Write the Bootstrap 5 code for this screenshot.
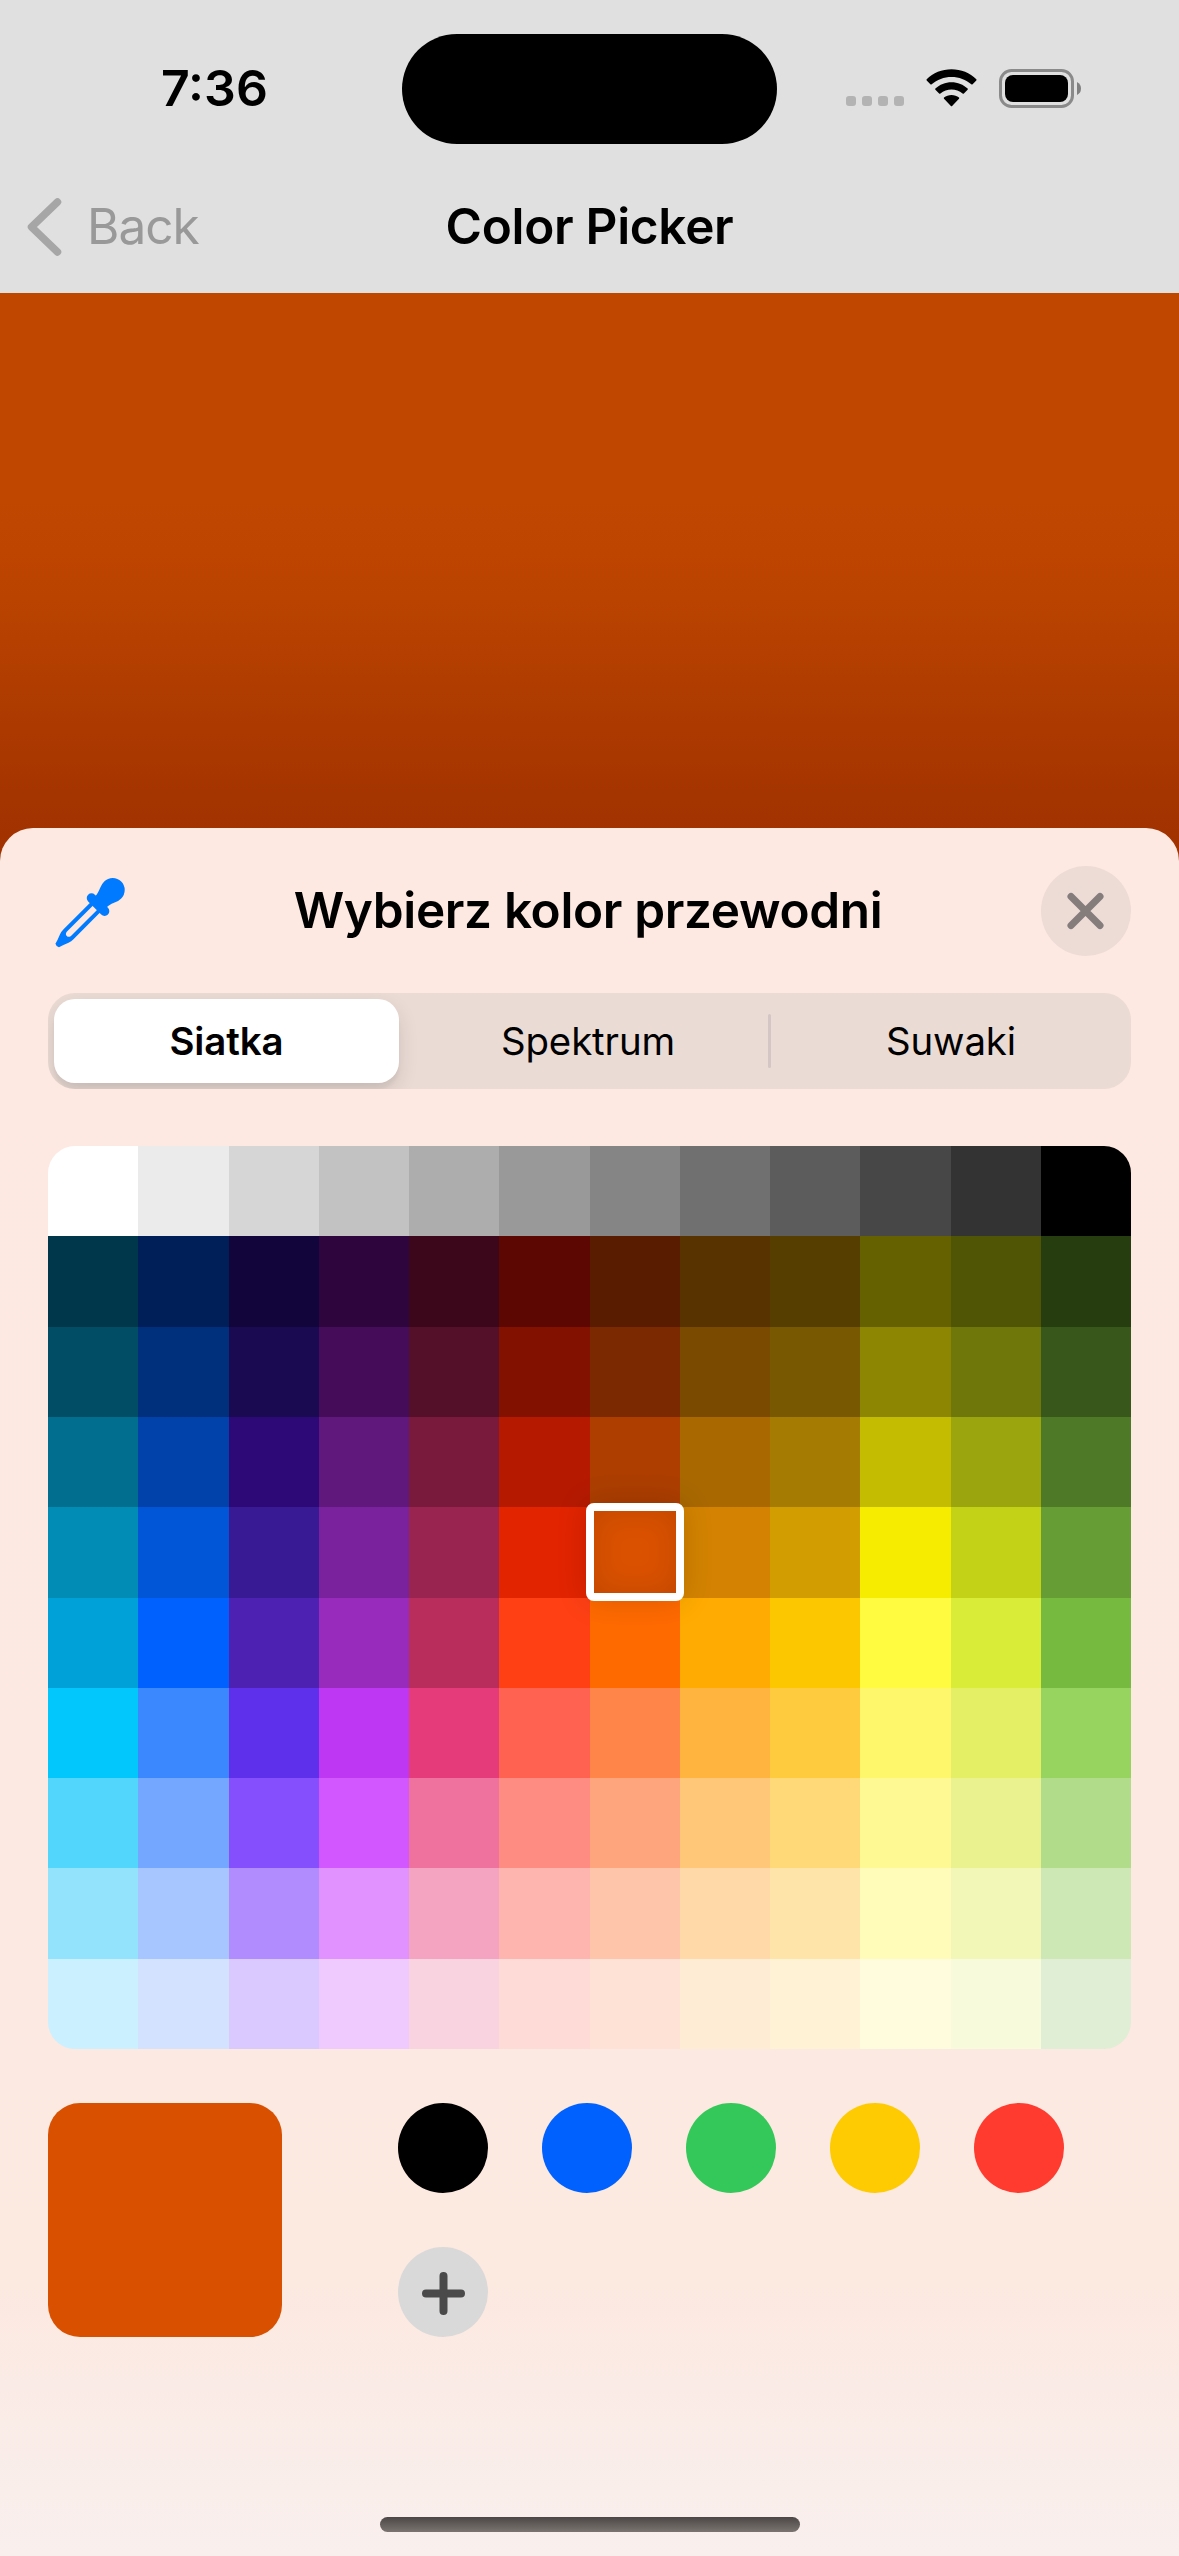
<!DOCTYPE html>
<html lang="pl">
<head>
<meta charset="utf-8">
<meta name="viewport" content="width=device-width, initial-scale=1">
<title>Color Picker</title>
<link rel="stylesheet" href="https://cdn.jsdelivr.net/npm/bootstrap@5.3.0/dist/css/bootstrap.min.css">
<style>
  body { font-family: Inter, "Liberation Sans", sans-serif; color: #000; margin: 0; background: #c04700; }
  svg { display: block; flex: none; }
  .phone { width: 1179px; height: 2556px; overflow: hidden; background: linear-gradient(#c04700 0, #c04700 500px, #ba4300 600px, #ae3b00 705px, #a43400 800px, #a03100 870px); }
  .topbar { height: 293px; background: #e0e0e0; }
  .status { height: 178px; }
  .clock { width: 402px; padding-left: 161px; margin-bottom: 2px; font-size: 50px; font-weight: 600; line-height: 1; }
  .island { width: 375px; height: 110px; background: #000; }
  .indicators { padding-left: 69px; margin-bottom: 2px; }
  .dots { gap: 6px; margin: 26px 22px 0 0; height: 10px; }
  .dots i { width: 10px; height: 10px; border-radius: 3px; background: #b3b3b3; }
  .battery { margin-left: 22px; }
  .navrow { height: 98px; padding: 0 27px; }
  .side { width: 300px; color: #999; font-size: 49.5px; line-height: 1; gap: 25px; letter-spacing: -1px; }
  .heading { font-size: 49.5px; font-weight: 600; line-height: 1; white-space: nowrap; letter-spacing: -.3px; }
  .sheet-head .heading { letter-spacing: -.35px; padding-right: 3px; }
  .canvas-area { height: 535px; }
  .sheet { height: 1728px; padding: 38px 48px 0; border-radius: 33px 33px 0 0;
    background: linear-gradient(#fde9e1 0, #fce9e1 1200px, #fce9e0 1450px, #fbebe6 1560px, #f9eeea 1660px, #f9efed 1728px); }
  .sheet-head { height: 90px; }
  .tool-btn { width: 90px; height: 90px; }
  .close-btn { background: #eddbd5; }
  .segments { height: 96px; margin-top: 37px; padding: 6px 0 6px 6px; border-radius: 27px; overflow: hidden; background: #ebdbd5; font-size: 38.4px; line-height: 1; }
  .segment { flex: 1 1 0; height: 84px; letter-spacing: -.1px; }
  .segment.chosen { flex: 0 0 345px; margin-right: 9px; background: #fff; border-radius: 21px; font-weight: 600; letter-spacing: -.1px; box-shadow: 0 8px 20px rgba(0,0,0,.12), 0 6px 3px rgba(0,0,0,.04); }
  .rule { width: 3px; height: 54px; border-radius: 2px; background: #d3c6c4; }
  .swatches { margin-top: 57px; height: 903px; display: grid; grid-template: repeat(10, 1fr) / repeat(12, 1fr); }
  .corner-tl { border-top-left-radius: 27px; } .corner-tr { border-top-right-radius: 27px; }
  .corner-bl { border-bottom-left-radius: 27px; } .corner-br { border-bottom-right-radius: 27px; }
  .picked::after { content: ""; position: absolute; inset: -3.75px; border: 8px solid #fff; border-radius: 8px; z-index: 2;
    box-shadow: 0 0 30px rgba(0,0,0,.15), inset 0 0 30px rgba(0,0,0,.12); }
  .bottom { margin-top: 54px; }
  .current { width: 234px; height: 234px; border-radius: 32px; background: #d95000; }
  .presets { margin-left: 116px; width: 670px; gap: 54px; }
  .dot { width: 90px; height: 90px; }
  .home { width: 420px; height: 15px; margin-top: 180px; background: linear-gradient(#4b4746, #7b7470); }
</style>
</head>
<body>
<div class="phone d-flex flex-column">
  <header class="topbar">
    <div class="status d-flex align-items-center">
      <div class="clock">7:36</div>
      <div class="island rounded-pill"></div>
      <div class="indicators d-flex align-items-center">
        <div class="dots d-flex"><i></i><i></i><i></i><i></i></div>
        <svg width="51" height="38" viewBox="0 0 51 38"><path d="M25.500 .3C35 .3 44 3.900 50.300 10.300Q50.800 10.900 50.300 11.500L46.600 15.300Q46 15.900 45.300 15.300C40 10.500 33 7.900 25.500 7.900S11 10.500 5.700 15.300Q5 15.900 4.400 15.300L.7 11.500Q.2 10.900.7 10.300C7 3.900 16 .3 25.500 .3ZM25.500 13.200C31.700 13.200 37.400 15.500 41.600 19.500Q42.200 20.100 41.600 20.700L37.900 24.500Q37.300 25.100 36.600 24.500C33.400 22 29.600 20.600 25.500 20.600S17.600 22 14.400 24.500Q13.700 25.100 13.100 24.500L9.400 20.700Q8.800 20.100 9.400 19.500C13.600 15.500 19.300 13.200 25.500 13.200ZM25.500 26C28.300 26 31 26.900 33 28.600Q33.500 29.200 33 29.800L26.100 36.900Q25.500 37.500 24.900 36.900L18 29.800Q17.500 29.200 18 28.600C20 26.900 22.700 26 25.500 26Z"/></svg>
        <svg class="battery" width="83" height="39" viewBox="0 0 83 39"><rect x="1.500" y="1.500" width="72" height="36" rx="11" fill="none" stroke="#8a8a8a" stroke-width="3"/><rect x="6" y="6" width="63" height="27" rx="8"/><path d="M78 13Q82 15 82 19.500T78 26Z" fill="#808080"/></svg>
      </div>
    </div>
    <div class="navrow d-flex align-items-center justify-content-between">
      <div class="side d-flex align-items-center">
        <svg width="35" height="58" viewBox="0 0 35 58"><path d="M30.500 4 4.500 29 30.500 54" fill="none" stroke="#a6a6a6" stroke-width="7.500" stroke-linecap="round" stroke-linejoin="round"/></svg>
        <span>Back</span>
      </div>
      <div class="heading">Color Picker</div>
      <div class="side"></div>
    </div>
  </header>
  <div class="canvas-area"></div>
  <main class="sheet">
    <div class="sheet-head d-flex align-items-center justify-content-between">
      <div class="tool-btn"><svg width="90" height="90" viewBox="0 0 90 90"><g transform="translate(9.200 79.500) rotate(45)" fill="#007aff"><path fill-rule="evenodd" d="M-2.500 0Q0 1.500 2.500 0Q3.500 -4 6 -10Q7 -13 7 -16L7 -56L-7 -56L-7 -16Q-7 -13 -6 -10Q-3.500 -4 -2.500 0ZM-3 -16.500L-3 -54L3 -54L3 -16.500Q2.500 -13.500 0 -13.500T-3 -16.500Z"/><rect x="-14" y="-62.500" width="28" height="9.500" rx="4.750"/><path d="M-8 -60L-8 -64Q-9 -68 -10.500 -71.500Q-12 -75 -12 -78.500A12 12 0 0 1 12 -78.500Q12 -75 10.500 -71.500Q9 -68 8 -64L8 -60Z"/></g></svg></div>
      <div class="heading">Wybierz kolor przewodni</div>
      <div class="tool-btn close-btn rounded-circle d-flex align-items-center justify-content-center">
        <svg width="40" height="40" viewBox="0 0 40 40"><path d="M5 5.500 34 34.500M34 5.500 5 34.500" stroke="#857d7c" stroke-width="7" stroke-linecap="round"/></svg>
      </div>
    </div>
    <div class="segments d-flex align-items-center">
      <div class="segment chosen d-flex align-items-center justify-content-center">Siatka</div>
      <div class="segment d-flex align-items-center justify-content-center">Spektrum</div>
      <div class="rule"></div>
      <div class="segment d-flex align-items-center justify-content-center">Suwaki</div>
    </div>
    <div class="swatches" id="swatches"></div>
    <div class="bottom d-flex">
      <div class="current"></div>
      <div class="presets d-flex flex-wrap">
        <div class="dot rounded-circle" style="background:#000"></div>
        <div class="dot rounded-circle" style="background:#0061fe"></div>
        <div class="dot rounded-circle" style="background:#34c85a"></div>
        <div class="dot rounded-circle" style="background:#fecb02"></div>
        <div class="dot rounded-circle" style="background:#ff3b30"></div>
        <div class="dot rounded-circle" style="background:#d9d9d9"><svg width="90" height="90" viewBox="0 0 90 90"><path d="M28 46.500H63M45.500 29V64" stroke="#4a4a4a" stroke-width="8" stroke-linecap="round"/></svg></div>
      </div>
    </div>
    <div class="home rounded-pill mx-auto"></div>
  </main>
</div>
<script src="https://cdn.jsdelivr.net/npm/bootstrap@5.3.0/dist/js/bootstrap.bundle.min.js"></script>
<script>
  const palette = [
    "ffffff ebebeb d6d6d6 c2c2c2 adadad 999999 858585 707070 5c5c5c 474747 333333 000000",
    "00374a 001e57 11053b 2e063d 3c071b 5c0701 5a1c00 583300 563d00 666100 4f5504 263e0f",
    "004d65 002f7b 1a0a52 450d59 551029 831100 7b2900 7a4a00 785800 8d8602 6f760a 38571a",
    "016e8f 0042a9 2c0977 61187c 791a3d b51a00 ad3e00 a96800 a67b01 c4bc00 9ba50e 4e7a27",
    "008cb4 0056d6 371a94 7a219e 99244f e22400 da5100 d38301 d19d01 f5ec00 c3d117 669d34",
    "00a1d8 0061fe 4d22b2 982abc b92d5d ff4015 ff6a00 ffab01 fdc700 fefb41 d9ec37 76bb40",
    "01c7fc 3a87fe 5e30eb be38f3 e63b7a ff6250 ff8648 feb43f fecb3e fff76b e4ef65 96d35f",
    "52d6fc 74a7ff 864ffe d357fe ee719e ff8c82 ffa57d ffc777 ffd977 fff994 eaf28f b1dd8b",
    "93e3fd a7c6ff b18cfe e292fe f4a4c0 ffb5af ffc5ab ffd9a8 fee4a8 fffbb9 f2f7b7 cde8b5",
    "cbf0ff d3e2ff d9c9fe efcaff f9d3e0 ffdbd8 ffe2d6 ffecd4 fff2d5 fefcdd f7fadb dfeed4"
  ].map(r => r.split(" "));
  const extra = { "0,0": "corner-tl", "0,11": "corner-tr", "9,0": "corner-bl", "9,11": "corner-br", "4,6": "picked position-relative" };
  document.getElementById("swatches").innerHTML = palette.map((row, r) => row.map((c, i) =>
    `<div class="${extra[r + "," + i] || ""}" style="background:#${c}"></div>`).join("")).join("");
</script>
</body>
</html>
